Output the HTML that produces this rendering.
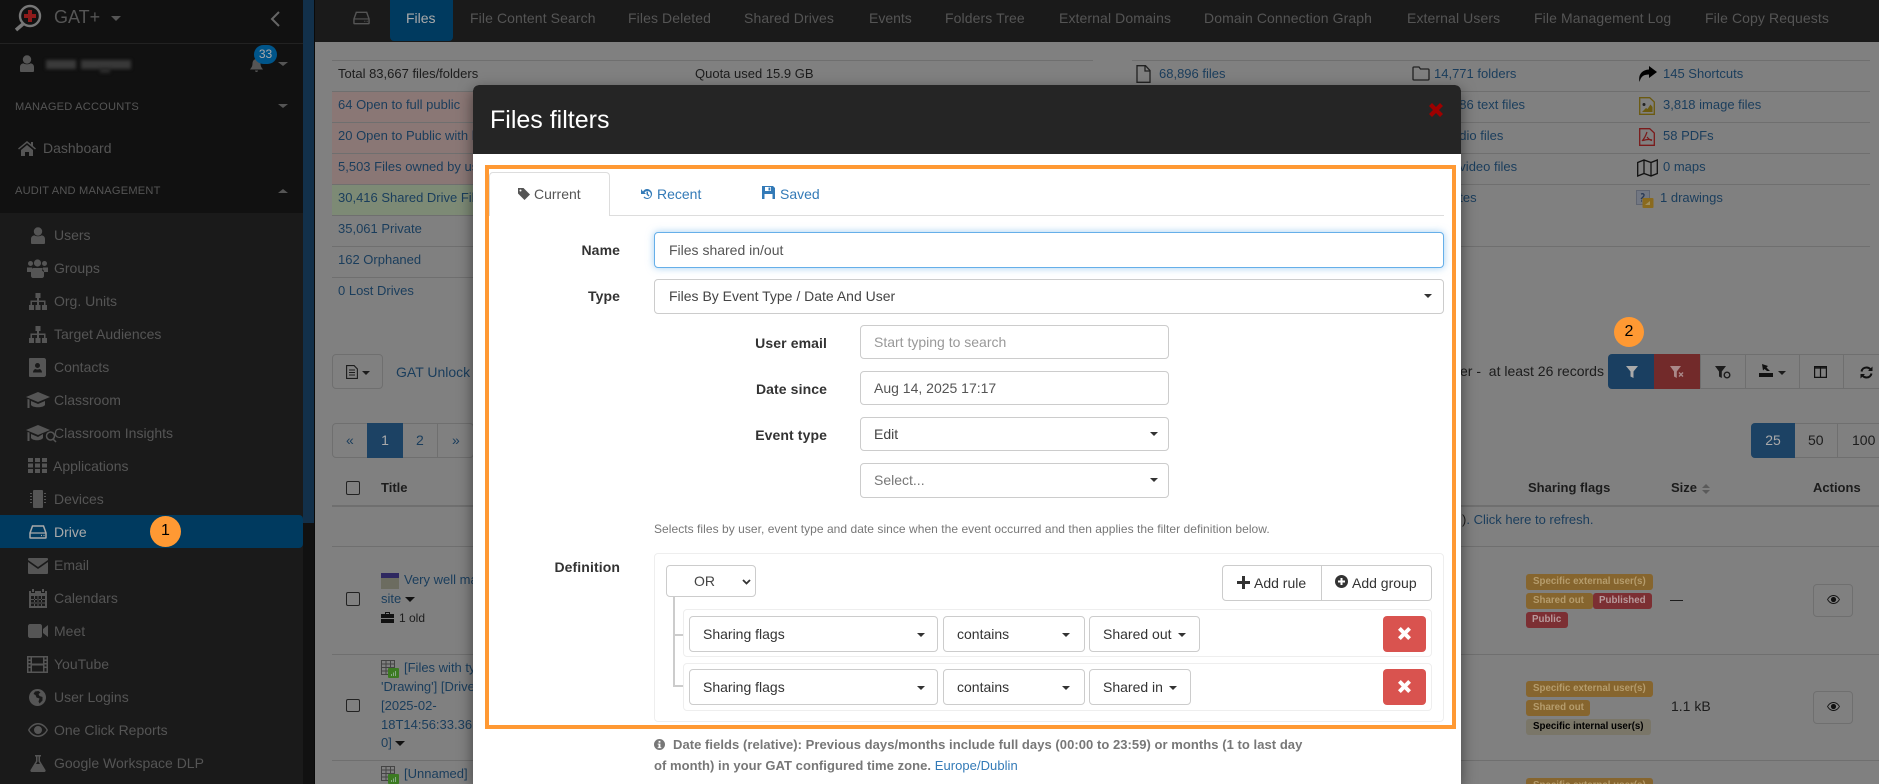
<!DOCTYPE html>
<html><head><meta charset="utf-8"><title>Files filters</title>
<style>
*{box-sizing:border-box}
html,body{margin:0;padding:0;width:1879px;height:784px;overflow:hidden}
#p{width:1879px;height:784px;overflow:hidden;position:relative;background:#808080;font-family:"Liberation Sans",sans-serif;font-size:14px}
.a{position:absolute}
.t{position:absolute;white-space:nowrap;line-height:20px}
svg{position:absolute;fill:currentColor;overflow:visible}
.s{color:#555;font-size:14px;left:54px}
.i{color:#555}
.n{color:#555;font-size:14px;top:8px}
.l{color:#1a3d5c;font-size:13px}
.k{color:#1c1c1c;font-size:13px}
.h{left:332px;width:761px;height:1px;background:#6f6f6f}
.h2{left:1132px;width:738px;height:1px;background:#6f6f6f}
.b{position:absolute;border:1px solid #6f6f6f}
.f{position:absolute;height:16px;border-radius:3px;font-size:9.75px;font-weight:bold;line-height:15px;padding-left:7px;white-space:nowrap;color:#b59c6c;background:#86652e}
.r{background:#7c2f33;color:#b89a9c}
.lab{position:absolute;white-space:nowrap;line-height:20px;font-weight:bold;color:#333;font-size:14px;text-align:right;letter-spacing:.1px}
.in{position:absolute;border:1px solid #ccc;border-radius:4px;background:#fff;color:#555;font-size:14px;padding:0 13px;white-space:nowrap}
.w{padding:0 14px}
.c{position:absolute;width:0;height:0;border-left:4px solid transparent;border-right:4px solid transparent;border-top:4px solid #333}
.cu{border-top:0;border-bottom:4px solid #555}
.rule{position:absolute;border:1px solid #eee;border-radius:4px;left:683px;width:749px;height:48px;background:#fff}
.del{position:absolute;left:1383px;width:43px;height:36px;background:#d9534f;border-radius:4px;color:#fff}
</style></head><body><div id="p">

<!-- sidebar -->
<div class="a" style="left:0;top:0;width:303px;height:784px;background:#1a1a1a"></div>
<div class="a" style="left:0;top:0;width:303px;height:213px;background:#111"></div>
<div class="a" style="left:0;top:43px;width:303px;height:1px;background:#222"></div>
<div class="a" style="left:303px;top:0;width:12px;height:784px;background:#111"></div>
<div class="a" style="left:303px;top:0;width:11px;height:523px;background:#12304a"></div>
<div class="a" style="left:314px;top:0;width:1px;height:784px;background:#0a0a0a"></div>

<!-- logo -->
<svg style="left:14px;top:3px;color:#666" width="29" height="29" viewBox="0 0 29 29"><circle cx="16" cy="13" r="10" fill="none" stroke="#777" stroke-width="2.4"/><path d="M9 21 2 27" stroke="#777" stroke-width="3.5" fill="none"/><path d="M14 7h4v4h4v4h-4v4h-4v-4h-4v-4h4z" fill="#8e1b1b"/></svg>
<div class="t" style="left:54px;top:7px;color:#555;font-size:18px">GAT+</div>
<div class="c" style="left:111px;top:16px;border-top-color:#555;border-left-width:5px;border-right-width:5px;border-top-width:5px"></div>
<svg style="left:270px;top:11px" width="10" height="16" viewBox="0 0 10 16"><path d="M9 1 2 8l7 7" fill="none" stroke="#666" stroke-width="2"/></svg>

<svg class="i" style="left:20px;top:55px" width="14" height="17" viewBox="0 0 14 17"><circle cx="7" cy="4.5" r="4.2"/><path d="M0 16v-4c0-2.5 2-3.6 3.5-3.6C5 9.6 9 9.6 10.5 8.4 12 8.4 14 9.500 14 12v4c0 .6-.4 1-1 1H1c-.6 0-1-.4-1-1z"/></svg>
<div class="a" style="left:46px;top:60px;width:30px;height:9px;background:#3a3a3a;filter:blur(1.5px)"></div>
<div class="a" style="left:81px;top:60px;width:50px;height:9px;background:#383838;filter:blur(1.5px)"></div>
<div class="a" style="left:100px;top:68px;width:10px;height:5px;background:#2c2c2c;filter:blur(1.5px)"></div>
<svg class="i" style="left:250px;top:59px" width="13" height="13" viewBox="0 0 13 13"><path d="M6.500 0C9 0 10.500 2 10.500 4.500c0 3 1.500 4.500 2.500 6H0c1-1.500 2.500-3 2.500-6C2.500 2 4 0 6.500 0zM5 11.500h3c0 1-.7 1.500-1.500 1.500S5 12.500 5 11.500z"/></svg>
<div class="a" style="left:254px;top:45px;width:23px;height:19px;border-radius:10px;background:#00558a;color:#aaa;font-size:12px;line-height:19px;text-align:center">33</div>
<div class="c" style="left:278px;top:62px;border-top-color:#555;border-left-width:5px;border-right-width:5px"></div>

<div class="t" style="left:15px;top:97px;color:#555;font-size:11.100px;font-weight:normal;letter-spacing:.2px">MANAGED ACCOUNTS</div>
<div class="c" style="left:278px;top:104px;border-top-color:#555;border-left-width:5px;border-right-width:5px"></div>
<svg class="i" style="left:18px;top:141px" width="18" height="15" viewBox="0 0 18 15"><path d="M9 0 0 7.500l1 1L9 2l8 6.500 1-1-3-2.500V1h-2v2.300zM3 9l6-5 6 5v6h-4v-4H7v4H3z"/></svg>
<div class="t s" style="left:43px;top:138px">Dashboard</div>
<div class="t" style="left:15px;top:181px;color:#555;font-size:11.100px;letter-spacing:.2px">AUDIT AND MANAGEMENT</div>
<div class="c cu" style="left:278px;top:189px;border-bottom-color:#555;border-left-width:5px;border-right-width:5px"></div>

<svg class="i" style="left:31px;top:227px" width="14" height="17" viewBox="0 0 14 17"><circle cx="7" cy="4.500" r="4.200"/><path d="M0 16v-4c0-2.500 2-3.600 3.500-3.600C5 9.600 9 9.600 10.500 8.400 12 8.400 14 9.500 14 12v4c0 .6-.4 1-1 1H1c-.6 0-1-.4-1-1z"/></svg>
<div class="t s" style="top:225px">Users</div>
<svg class="i" style="left:27px;top:259px" width="21" height="19" viewBox="0 0 21 19"><circle cx="10.500" cy="4" r="3.600"/><circle cx="3.500" cy="4.500" r="2.500"/><circle cx="17.500" cy="4.500" r="2.500"/><path d="M0 8.500h5l1 3-2 1.500H0zM21 8.500h-5l-1 3 2 1.500h4zM6 9h9l2 3v5c0 1-1 2-2 2H6c-1 0-2-1-2-2v-5z"/></svg>
<div class="t s" style="top:258px">Groups</div>
<svg class="i" style="left:28px;top:293px" width="20" height="17" viewBox="0 0 20 17"><path d="M7.500 0h5v5H11v2.500h6.500V12H19v5h-5v-5h2V9h-5v3h1.500v5h-5v-5H9V9H4v3h2v5H1v-5h1.500V7.500H9V5H7.500z"/></svg>
<div class="t s" style="top:291px">Org. Units</div>
<svg class="i" style="left:28px;top:326px" width="20" height="17" viewBox="0 0 20 17"><path d="M7.500 0h5v5H11v2.500h6.500V12H19v5h-5v-5h2V9h-5v3h1.500v5h-5v-5H9V9H4v3h2v5H1v-5h1.500V7.500H9V5H7.500z"/></svg>
<div class="t s" style="top:324px">Target Audiences</div>
<svg class="i" style="left:29px;top:358px" width="18" height="19" viewBox="0 0 18 19"><path fill-rule="evenodd" d="M1 0h14c1 0 2 1 2 2v15c0 1-1 2-2 2H1c-.6 0-1-.4-1-1V1c0-.6.4-1 1-1zM8.500 5a2.500 2.500 0 1 0 0 5 2.500 2.500 0 0 0 0-5zM4 14.500h9c0-2-1.500-3.500-2.500-3.500-1 .7-3 .7-4 0C5.500 11 4 12.500 4 14.500z"/></svg>
<div class="t s" style="top:357px">Contacts</div>
<svg class="i" style="left:26px;top:392px" width="24" height="18" viewBox="0 0 24 18"><path d="M12 0 0 5l12 5 12-5zM5 9v4c2 3 12 3 14 0V9l-7 3zM1.500 7v9h2V7.500z"/></svg>
<div class="t s" style="top:390px">Classroom</div>
<svg class="i" style="left:26px;top:425px" width="30" height="18" viewBox="0 0 30 18"><path d="M12 0 0 5l12 5 12-5zM5 9v4c2 3 10 3 12 0V9l-5 3zM1.500 7v9h2V7.500z"/><circle cx="24.500" cy="11" r="4" fill="none" stroke="#555" stroke-width="1.500"/><path d="M27 14l3 3" stroke="#555" stroke-width="1.500"/></svg>
<div class="t s" style="top:423px">Classroom Insights</div>
<svg class="i" style="left:28px;top:458px" width="20" height="15" viewBox="0 0 20 15"><path d="M0 0h5v4H0zM7 0h5v4H7zM14 0h5v4h-5zM0 5.500h5v4H0zM7 5.500h5v4H7zM14 5.500h5v4h-5zM0 11h5v4H0zM7 11h5v4H7zM14 11h5v4h-5z"/></svg>
<div class="t s" style="left:53px;top:456px">Applications</div>
<svg class="i" style="left:30px;top:490px" width="16" height="18" viewBox="0 0 16 18"><path d="M4 0h8c.6 0 1 .4 1 1v16c0 .6-.4 1-1 1H4c-.6 0-1-.4-1-1V1c0-.6.4-1 1-1zM0 3h2v1H0zM0 6h2v1H0zM0 9h2v1H0zM0 12h2v1H0zM14 3h2v1h-2zM14 6h2v1h-2zM14 9h2v1h-2zM14 12h2v1h-2z"/></svg>
<div class="t s" style="top:489px">Devices</div>

<div class="a" style="left:0;top:515px;width:303px;height:33px;background:#003a5f;border-radius:0 4px 4px 0"></div>
<svg style="left:29px;top:525px;color:#aaa" width="18" height="14" viewBox="0 0 18 14"><path d="M3.500 1h11l2.500 7v4.500c0 .3-.2.5-.5.5h-15c-.3 0-.5-.2-.5-.5V8z" fill="none" stroke="#aaa" stroke-width="1.500"/><path d="M1 8h16M12 10.500h1M14.500 10.500h1" stroke="#aaa" stroke-width="1.200" fill="none"/></svg>
<div class="t s" style="top:522px;color:#aaa">Drive</div>
<div class="a" style="left:150px;top:516px;width:31px;height:31px;border-radius:50%;background:#f93;color:#000;font-size:16px;line-height:29px;text-align:center">1</div>

<svg class="i" style="left:28px;top:558px" width="20" height="16" viewBox="0 0 20 16"><path d="M0 1c0-.6.4-1 1-1h18c.6 0 1 .4 1 1v1L10 9 0 2zM0 4v11c0 .6.4 1 1 1h18c.6 0 1-.4 1-1V4l-10 7z"/></svg>
<div class="t s" style="top:555px">Email</div>
<svg class="i" style="left:29px;top:589px" width="18" height="19" viewBox="0 0 18 19"><path fill-rule="evenodd" d="M3 0h2v3H3zM13 0h2v3h-2zM0 2h2v2h4V2h6v2h4V2h2v17H0zM2 7v10h14V7zM5 7h1v10H5zM8.500 7h1v10h-1zM12 7h1v10h-1zM2 10h14v1H2zM2 13.500h14v1H2z"/></svg>
<div class="t s" style="top:588px">Calendars</div>
<svg class="i" style="left:28px;top:624px" width="20" height="14" viewBox="0 0 20 14"><path d="M2 0h10c1 0 2 1 2 2v10c0 1-1 2-2 2H2c-1 0-2-1-2-2V2C0 1 1 0 2 0zM15 5l5-4v12l-5-4z"/></svg>
<div class="t s" style="top:621px">Meet</div>
<svg class="i" style="left:27px;top:656px" width="21" height="17" viewBox="0 0 21 17"><path fill-rule="evenodd" d="M0 0h21v17H0zM1.500 1.500v2h2v-2zM1.500 5v2h2V5zM1.500 8.500v2h2v-2zM1.500 12v3.500h2V12zM17.500 1.500v2h2v-2zM17.500 5v2h2V5zM17.500 8.500v2h2v-2zM17.500 12v3.500h2V12zM5 1.500v6h11v-6zM5 9.500v6h11v-6z"/></svg>
<div class="t s" style="top:654px">YouTube</div>
<svg class="i" style="left:29px;top:689px" width="17" height="17" viewBox="0 0 17 17"><path fill-rule="evenodd" d="M8.500 0a8.500 8.500 0 1 1 0 17 8.500 8.500 0 0 1 0-17zM6 2.500 4.500 5l2 1 1 2.500 3 1-1 3 1 2 3-3V8l-3-1-1-2 2-1.500L9.500 2z"/></svg>
<div class="t s" style="top:687px">User Logins</div>
<svg class="i" style="left:28px;top:723px" width="20" height="14" viewBox="0 0 20 14"><path fill-rule="evenodd" d="M10 0c4.500 0 8 3 10 7-2 4-5.500 7-10 7S2 11 0 7c2-4 5.500-7 10-7zM10 1.500C7 1.500 3.500 3.500 1.500 7c2 3.500 5.500 5.500 8.500 5.500s6.500-2 8.500-5.500c-2-3.500-5.500-5.500-8.500-5.500zM10 3a4 4 0 1 1 0 8 4 4 0 0 1 0-8z"/></svg>
<div class="t s" style="top:720px">One Click Reports</div>
<svg class="i" style="left:30px;top:755px" width="16" height="17" viewBox="0 0 16 17"><path fill-rule="evenodd" d="M5 0h6v1.500h-1V6l5.500 9c.5 1-.2 2-1 2h-13c-.8 0-1.500-1-1-2L6 6V1.500H5zM7.500 1.500V6.500L6 9h4L8.500 6.500v-5z"/></svg>
<div class="t s" style="top:753px">Google Workspace DLP</div>

<!-- top nav -->
<div class="a" style="left:315px;top:0;width:1564px;height:42px;background:#1a1a1a"></div>
<svg style="left:353px;top:11px" width="17" height="14" viewBox="0 0 18 14"><path d="M3.500 1h11l2.500 7v4.500c0 .3-.2.5-.5.5h-15c-.3 0-.5-.2-.5-.5V8z" fill="none" stroke="#555" stroke-width="1.500"/><path d="M1 8h16M12 10.500h1M14.500 10.500h1" stroke="#555" stroke-width="1.200" fill="none"/></svg>
<div class="a" style="left:390px;top:0;width:63px;height:41px;background:#003a5f;border-radius:0 0 4px 4px"></div>
<div class="t n" style="left:406px;color:#aaa">Files</div>
<div class="t n" style="left:470px;letter-spacing:.1px">File Content Search</div>
<div class="t n" style="left:628px;letter-spacing:.1px">Files Deleted</div>
<div class="t n" style="left:744px;letter-spacing:.1px">Shared Drives</div>
<div class="t n" style="left:869px">Events</div>
<div class="t n" style="left:945px;letter-spacing:.1px">Folders Tree</div>
<div class="t n" style="left:1059px;letter-spacing:.1px">External Domains</div>
<div class="t n" style="left:1204px;letter-spacing:.1px">Domain Connection Graph</div>
<div class="t n" style="left:1407px;letter-spacing:.1px">External Users</div>
<div class="t n" style="left:1534px;letter-spacing:.1px">File Management Log</div>
<div class="t n" style="left:1705px;letter-spacing:.1px">File Copy Requests</div>

<!-- stats tables -->
<div class="a" style="left:332px;top:91px;width:761px;height:93px;background:#8a7775"></div>
<div class="a" style="left:332px;top:184px;width:761px;height:31px;background:#7d8a75"></div>
<div class="a h" style="top:60px"></div><div class="a h" style="top:91px"></div><div class="a h" style="top:122px"></div><div class="a h" style="top:153px"></div><div class="a h" style="top:184px"></div><div class="a h" style="top:215px"></div><div class="a h" style="top:246px"></div>
<div class="a h2" style="top:60px"></div><div class="a h2" style="top:91px"></div><div class="a h2" style="top:122px"></div><div class="a h2" style="top:153px"></div><div class="a h2" style="top:184px"></div><div class="a h2" style="top:246px"></div>
<div class="a" style="left:332px;top:277px;width:761px;height:1px;background:#6f6f6f"></div>
<div class="t k" style="left:338px;top:64px">Total 83,667 files/folders</div>
<div class="t k" style="left:695px;top:64px">Quota used 15.9 GB</div>
<div class="t l" style="left:338px;top:95px">64 Open to full public</div>
<div class="t l" style="left:338px;top:126px">20 Open to Public with link</div>
<div class="t l" style="left:338px;top:157px">5,503 Files owned by users</div>
<div class="t l" style="left:338px;top:188px">30,416 Shared Drive Files</div>
<div class="t l" style="left:338px;top:219px">35,061 Private</div>
<div class="t l" style="left:338px;top:250px">162 Orphaned</div>
<div class="t l" style="left:338px;top:281px">0 Lost Drives</div>

<svg style="left:1136px;top:65px" width="15" height="18" viewBox="0 0 15 18"><path d="M1 .7h8.500L14 5.500v11.800H1zM9 1v5h5" fill="none" stroke="#222" stroke-width="1.300"/></svg>
<div class="t l" style="left:1159px;top:64px">68,896 files</div>
<svg style="left:1412px;top:66px" width="18" height="15" viewBox="0 0 18 15"><path d="M1 2c0-.6.400-1 1-1h5l1.500 2H16c.6 0 1 .4 1 1v9c0 .6-.4 1-1 1H2c-.6 0-1-.4-1-1z" fill="none" stroke="#222" stroke-width="1.300"/></svg>
<div class="t l" style="left:1434px;top:64px">14,771 folders</div>
<svg style="left:1638px;top:66px;color:#000" width="19" height="16" viewBox="0 0 19 16"><path d="M11 0l8 6-8 6V8.500C6 8.500 3 10 1.500 16 0 9 3.500 4 11 3.500z"/></svg>
<div class="t l" style="left:1663px;top:64px">145 Shortcuts</div>
<div class="t l" style="left:1434px;top:95px">13,186 text files</div>
<svg style="left:1639px;top:97px" width="16" height="18" viewBox="0 0 16 18"><path d="M.7.7h10L15.300 5v12.300H.7z" fill="none" stroke="#6b5a10" stroke-width="1.300"/><circle cx="5" cy="7.500" r="1.500" fill="#222"/><path d="M3 15l4-4 1.500 1 3-4.500 2 2.500v5z" fill="#6b5a10"/></svg>
<div class="t l" style="left:1663px;top:95px">3,818 image files</div>
<div class="t l" style="left:1434px;top:126px">5 audio files</div>
<svg style="left:1639px;top:128px" width="16" height="18" viewBox="0 0 16 18"><path d="M.7.7h10L15.300 5v12.300H.7z" fill="none" stroke="#7a1a1a" stroke-width="1.300"/><path d="M8 4c-1 3-2 6-5 9M8 9c1.500 2 3 3 5 3.500M4 12.500c3-1 6-1.500 9-.5" fill="none" stroke="#7a1a1a" stroke-width="1.200"/></svg>
<div class="t l" style="left:1663px;top:126px">58 PDFs</div>
<div class="t l" style="left:1434px;top:157px">231 video files</div>
<svg style="left:1637px;top:159px" width="21" height="18" viewBox="0 0 21 18"><path d="M.7 3.500 7 1l7 2.500L20.300 1v13.500L14 17l-7-2.500L.7 17zM7 1v13.500M14 3.500V17" fill="none" stroke="#111" stroke-width="1.300"/></svg>
<div class="t l" style="left:1663px;top:157px">0 maps</div>
<div class="t l" style="left:1434px;top:188px">2 notes</div>
<svg style="left:1636px;top:190px" width="18" height="18" viewBox="0 0 18 18"><rect x="0.500" y="0.500" width="13" height="14" fill="#727782" stroke="#5f6470"/><path d="M5 4c3-1 4 1 2 3L5 9M5 11h1" stroke="#2a3a55" fill="none" stroke-width="1.300"/><rect x="6.500" y="8" width="11" height="10" rx="1" fill="#8a6a1e"/><path d="M9 15l5-4v4z" fill="#a0905e"/></svg>
<div class="t l" style="left:1660px;top:188px">1 drawings</div>

<!-- toolbar -->
<div class="b" style="left:332px;top:354px;width:51px;height:35px;border-radius:4px"></div>
<svg style="left:346px;top:365px" width="12" height="14" viewBox="0 0 12 14"><path d="M.6.6h7.500L11.400 4v9.400H.6zM3 5h6M3 7.500h6M3 10h6" fill="none" stroke="#1c1c1c" stroke-width="1.100"/></svg>
<div class="c" style="left:362px;top:371px;border-top-color:#1c1c1c"></div>
<div class="t l" style="left:396px;top:362px;font-size:14px">GAT Unlock</div>
<div class="t k" style="left:1460px;top:361px;font-size:14px;color:#1c1c1c">er -&nbsp; at least 26 records</div>
<div class="a" style="left:1614px;top:317px;width:30px;height:30px;border-radius:50%;background:#f93;color:#000;font-size:16px;line-height:29px;text-align:center">2</div>
<div class="a" style="left:1608px;top:354px;width:46px;height:35px;background:#1a3f61;border-radius:4px 0 0 4px"></div>
<svg style="left:1626px;top:366px;color:#aaa" width="12" height="12" viewBox="0 0 12 12"><path d="M0 0h12L7.500 5.500V12l-3-1.500v-5z"/></svg>
<div class="a" style="left:1654px;top:354px;width:46px;height:35px;background:#722a2a"></div>
<svg style="left:1670px;top:366px;color:#a88" width="15" height="12" viewBox="0 0 15 12"><path d="M0 0h11L6.800 5.500V12l-2.800-1.500v-5zM8.500 7l1-1 1.500 1.500L12.500 6l1 1L12 8.500l1.500 1.500-1 1L11 9.500 9.500 11l-1-1L10 8.500z"/></svg>
<div class="b" style="left:1700px;top:354px;width:46px;height:35px"></div>
<svg style="left:1715px;top:366px;color:#1c1c1c" width="16" height="13" viewBox="0 0 16 13"><path d="M0 0h11L6.800 5.500V12l-2.800-1.500v-5z"/><circle cx="12" cy="9" r="2.800" fill="none" stroke="#1c1c1c" stroke-width="1.400"/></svg>
<div class="b" style="left:1745px;top:354px;width:55px;height:35px"></div>
<svg style="left:1759px;top:363px;color:#111" width="14" height="15" viewBox="0 0 14 15"><path d="M3 1l6 2-1.500 1.500L11 8H8L5.500 6 4 7.500zM0 10h14v4H0z"/></svg>
<div class="c" style="left:1778px;top:371px;border-top-color:#1c1c1c"></div>
<div class="b" style="left:1799px;top:354px;width:45px;height:35px"></div>
<svg style="left:1814px;top:366px" width="13" height="12" viewBox="0 0 13 12"><path d="M.6.6h11.800v10.800H.6zM6.500.6v10.800M.6 2h11.800" fill="none" stroke="#111" stroke-width="1.200"/></svg>
<div class="b" style="left:1843px;top:354px;width:40px;height:35px"></div>
<svg style="left:1860px;top:366px" width="13" height="13" viewBox="0 0 13 13"><path d="M1.500 5.500C2 3 4 1.500 6.500 1.500c1.500 0 3 .7 4 1.800M11.500 7.500C11 10 9 11.500 6.500 11.500c-1.500 0-3-.7-4-1.800" fill="none" stroke="#111" stroke-width="2"/><path d="M12.500.5v4.500H8zM.5 12.500V8H5z" fill="#111"/></svg>

<!-- pagination -->
<div class="b" style="left:332px;top:423px;width:142px;height:35px;border-radius:4px"></div>
<div class="a" style="left:367px;top:423px;width:36px;height:35px;background:#1c4264;color:#aaa;text-align:center;line-height:34px;font-size:14px">1</div>
<div class="a" style="left:437px;top:423px;width:1px;height:35px;background:#6f6f6f"></div>
<div class="t l" style="left:346px;top:430px;font-size:14px">«</div>
<div class="t l" style="left:416px;top:430px;font-size:14px">2</div>
<div class="t l" style="left:452px;top:430px;font-size:14px">»</div>
<div class="b" style="left:1751px;top:423px;width:140px;height:35px;border-radius:4px"></div>
<div class="a" style="left:1751px;top:423px;width:44px;height:35px;background:#1c4264;color:#aaa;text-align:center;line-height:34px;font-size:14px;border-radius:4px 0 0 4px">25</div>
<div class="a" style="left:1837px;top:423px;width:1px;height:35px;background:#6f6f6f"></div>
<div class="t k" style="left:1808px;top:430px;font-size:14px">50</div>
<div class="t k" style="left:1852px;top:430px;font-size:14px">100</div>

<!-- table -->
<div class="a" style="left:346px;top:481px;width:14px;height:14px;border:1px solid #222;border-radius:2px"></div>
<div class="t" style="left:381px;top:478px;font-size:13px;font-weight:bold;color:#1c1c1c">Title</div>
<div class="t" style="left:1528px;top:478px;font-size:13px;font-weight:bold;color:#1c1c1c">Sharing flags</div>
<div class="t" style="left:1671px;top:478px;font-size:13px;font-weight:bold;color:#1c1c1c">Size</div>
<div class="c cu" style="left:1702px;top:484px;border-bottom-color:#5a5a5a"></div>
<div class="c" style="left:1702px;top:490px;border-top-color:#5a5a5a"></div>
<div class="t" style="left:1813px;top:478px;font-size:13px;font-weight:bold;color:#1c1c1c">Actions</div>
<div class="a" style="left:332px;top:505px;width:1547px;height:2px;background:#6f6f6f"></div>
<div class="a" style="left:332px;top:546px;width:1547px;height:1px;background:#6f6f6f"></div>
<div class="a" style="left:332px;top:654px;width:1547px;height:1px;background:#6f6f6f"></div>
<div class="a" style="left:332px;top:760px;width:1547px;height:1px;background:#6f6f6f"></div>
<div class="t l" style="left:1462px;top:510px"><span style="color:#1c1c1c">)</span>. Click here to refresh.</div>

<div class="a" style="left:346px;top:592px;width:14px;height:14px;border:1px solid #222;border-radius:2px"></div>
<div class="a" style="left:381px;top:573px;width:18px;height:16px;background:#6c6c60"></div>
<div class="a" style="left:381px;top:573px;width:18px;height:5px;background:#2f2860"></div>
<div class="t l" style="left:404px;top:570px">Very well made</div>
<div class="t l" style="left:381px;top:589px">site</div>
<div class="c" style="left:405px;top:597px;border-top-color:#111;border-left-width:5px;border-right-width:5px;border-top-width:5px"></div>
<svg style="left:381px;top:612px;color:#111" width="13" height="11" viewBox="0 0 13 11"><path d="M4 0h5v2h4v4H0V2h4zM5 1v1h3V1zM0 7h13v4H0z"/></svg>
<div class="t k" style="left:399px;top:608px;font-size:12px">1 old</div>

<div class="a" style="left:346px;top:699px;width:14px;height:13px;border:1px solid #222;border-radius:2px"></div>
<svg style="left:381px;top:660px" width="18" height="18" viewBox="0 0 18 18"><path d="M.5.5h13v14H.5zM.5 4h13M.5 7.500h13M.5 11h13M5 .5v14M9.500.5v14" fill="none" stroke="#444" stroke-width="1"/><rect x="7" y="8" width="11" height="10" rx="1" fill="#3c7a22"/><path d="M10 16v-2h1v2zM12 16v-3.500h1V16zM14 16v-5h1v5z" fill="#8a8"/></svg>
<div class="t l" style="left:404px;top:658px">[Files with type</div>
<div class="t l" style="left:381px;top:677px">'Drawing'] [Drive</div>
<div class="t l" style="left:381px;top:696px">[2025-02-</div>
<div class="t l" style="left:381px;top:715px">18T14:56:33.36</div>
<div class="t l" style="left:381px;top:733px">0]</div>
<div class="c" style="left:395px;top:741px;border-top-color:#111;border-left-width:5px;border-right-width:5px;border-top-width:5px"></div>
<svg style="left:381px;top:766px" width="18" height="18" viewBox="0 0 18 18"><path d="M.5.5h13v14H.5zM.5 4h13M.5 7.500h13M.5 11h13M5 .5v14M9.500.5v14" fill="none" stroke="#444" stroke-width="1"/><rect x="7" y="8" width="11" height="10" rx="1" fill="#3c7a22"/><path d="M10 16v-2h1v2zM12 16v-3.500h1V16zM14 16v-5h1v5z" fill="#8a8"/></svg>
<div class="t l" style="left:404px;top:764px">[Unnamed]</div>

<div class="f" style="left:1526px;top:574px;width:127px">Specific external user(s)</div>
<div class="f" style="left:1526px;top:593px;width:67px">Shared out</div>
<div class="f r" style="left:1593px;top:593px;width:59px;padding-left:6px">Published</div>
<div class="f r" style="left:1526px;top:612px;width:42px;padding-left:6px">Public</div>
<div class="f" style="left:1526px;top:681px;width:127px">Specific external user(s)</div>
<div class="f" style="left:1526px;top:700px;width:64px">Shared out</div>
<div class="f" style="left:1526px;top:719px;width:125px;background:#7a7668;color:#000">Specific internal user(s)</div>
<div class="f" style="left:1526px;top:778px;width:127px">Specific external user(s)</div>

<div class="a" style="left:1670px;top:600px;width:13px;height:1px;background:#1c1c1c"></div>
<div class="t k" style="left:1671px;top:696px;font-size:14px">1.1 kB</div>
<div class="b" style="left:1813px;top:584px;width:40px;height:33px;border-radius:4px"></div>
<svg style="left:1827px;top:595px;color:#111" width="13" height="9" viewBox="0 0 20 14"><path fill-rule="evenodd" d="M10 0c4.500 0 8 3 10 7-2 4-5.500 7-10 7S2 11 0 7c2-4 5.500-7 10-7zM10 1.500C7 1.500 3.500 3.500 1.500 7c2 3.500 5.500 5.500 8.500 5.500s6.500-2 8.500-5.500c-2-3.500-5.500-5.500-8.500-5.500zM10 3a4 4 0 1 1 0 8 4 4 0 0 1 0-8z"/></svg>
<div class="b" style="left:1813px;top:691px;width:40px;height:33px;border-radius:4px"></div>
<svg style="left:1827px;top:702px;color:#111" width="13" height="9" viewBox="0 0 20 14"><path fill-rule="evenodd" d="M10 0c4.500 0 8 3 10 7-2 4-5.500 7-10 7S2 11 0 7c2-4 5.500-7 10-7zM10 1.500C7 1.500 3.500 3.500 1.500 7c2 3.500 5.500 5.500 8.500 5.500s6.500-2 8.500-5.500c-2-3.500-5.500-5.500-8.500-5.500zM10 3a4 4 0 1 1 0 8 4 4 0 0 1 0-8z"/></svg>

<!-- modal -->
<div class="a" style="left:473px;top:85px;width:988px;height:699px;background:#fff;border-radius:6px 6px 0 0;box-shadow:0 5px 15px rgba(0,0,0,.5)"></div>
<div class="a" style="left:473px;top:85px;width:988px;height:69px;background:#252525;border-radius:6px 6px 0 0"></div>
<div class="t" style="left:490px;top:105px;line-height:30px;color:#fff;font-size:25px">Files filters</div>
<svg style="left:1429px;top:103px;color:#9e0000" width="14" height="14" viewBox="0 0 14 14"><path d="M3 0 7 4l4-4 3 3-4 4 4 4-3 3-4-4-4 4-3-3 4-4-4-4z"/></svg>

<div class="a" style="left:485px;top:165px;width:971px;height:564px;border:4px solid #f93"></div>

<!-- tabs -->
<div class="a" style="left:609px;top:215px;width:835px;height:1px;background:#ddd"></div>
<div class="a" style="left:489px;top:172px;width:121px;height:44px;background:#fff;border:1px solid #ddd;border-bottom:0;border-radius:4px 4px 0 0"></div>
<svg style="left:518px;top:188px;color:#555" width="12" height="12" viewBox="0 0 12 12"><path fill-rule="evenodd" d="M0 0h5.500L12 6.500 6.500 12 0 5.500zM2.500 1.500a1 1 0 1 0 0 2 1 1 0 0 0 0-2z"/></svg>
<div class="t" style="left:534px;top:184px;color:#555">Current</div>
<svg style="left:641px;top:188px;color:#337ab7" width="12" height="12" viewBox="0 0 12 12"><path d="M2 3.500C3 1.700 4.500 1 6 1a5 5 0 1 1-3.500 8.500l1-1A3.500 3.500 0 1 0 3.500 4.500L5 6H0V1zM5.500 3.500H7V6l1.500 1.500-1 1L5.500 6.500z"/></svg>
<div class="t" style="left:657px;top:184px;color:#337ab7">Recent</div>
<svg style="left:762px;top:186px;color:#337ab7" width="13" height="13" viewBox="0 0 13 13"><path fill-rule="evenodd" d="M0 0h11l2 2v11H0zM3 1v4h6V1zM6.500 1.500h1.800v3H6.500zM2.500 8v5h8V8z"/></svg>
<div class="t" style="left:780px;top:184px;color:#337ab7">Saved</div>

<!-- form -->
<div class="lab" style="right:1259px;top:240px">Name</div>
<div class="in w" style="left:654px;top:232px;width:790px;height:36px;line-height:34px;border-color:#66afe9;box-shadow:0 0 8px rgba(102,175,233,.6)">Files shared in/out</div>
<div class="lab" style="right:1259px;top:286px">Type</div>
<div class="in w" style="left:654px;top:279px;width:790px;height:35px;line-height:33px;color:#444">Files By Event Type / Date And User</div>
<div class="c" style="left:1424px;top:294px"></div>
<div class="lab" style="right:1052px;top:333px">User email</div>
<div class="in" style="left:860px;top:325px;width:309px;height:34px;line-height:32px;color:#999">Start typing to search</div>
<div class="lab" style="right:1052px;top:379px">Date since</div>
<div class="in" style="left:860px;top:371px;width:309px;height:34px;line-height:32px">Aug 14, 2025 17:17</div>
<div class="lab" style="right:1052px;top:425px">Event type</div>
<div class="in" style="left:860px;top:417px;width:309px;height:34px;line-height:32px;color:#444">Edit</div>
<div class="c" style="left:1150px;top:432px"></div>
<div class="in" style="left:860px;top:463px;width:309px;height:35px;line-height:33px;color:#777">Select...</div>
<div class="c" style="left:1150px;top:478px"></div>
<div class="t" style="left:654px;top:519px;font-size:12px;color:#777;letter-spacing:.045px">Selects files by user, event type and date since when the event occurred and then applies the filter definition below.</div>

<div class="lab" style="right:1259px;top:557px">Definition</div>
<div class="a" style="left:654px;top:553px;width:790px;height:169px;border:1px solid #eee;border-radius:4px"></div>
<div class="a" style="left:673px;top:597px;width:2px;height:90px;background:#ccc"></div>
<div class="a" style="left:675px;top:634px;width:9px;height:2px;background:#ccc"></div>
<div class="a" style="left:675px;top:685px;width:9px;height:2px;background:#ccc"></div>
<div class="in" style="left:666px;top:565px;width:90px;height:32px;line-height:30px;padding-left:27px;color:#444">OR</div>
<svg style="left:742px;top:579px" width="9" height="6" viewBox="0 0 9 6"><path d="M1 1l3.500 3.500L8 1" fill="none" stroke="#333" stroke-width="1.800"/></svg>
<div class="in" style="left:1222px;top:565px;width:210px;height:36px;line-height:34px;color:#333;padding:0"></div>
<div class="a" style="left:1321px;top:565px;width:1px;height:36px;background:#ccc"></div>
<svg style="left:1237px;top:576px;color:#333" width="13" height="13" viewBox="0 0 13 13"><path d="M5 0h3v5h5v3H8v5H5V8H0V5h5z"/></svg>
<div class="t" style="left:1254px;top:573px;color:#333">Add rule</div>
<svg style="left:1335px;top:575px;color:#333" width="13" height="13" viewBox="0 0 13 13"><path fill-rule="evenodd" d="M6.500 0a6.500 6.500 0 1 1 0 13 6.500 6.500 0 0 1 0-13zM5.500 3v2.500H3v2h2.500V10h2V7.500H10v-2H7.500V3z"/></svg>
<div class="t" style="left:1352px;top:573px;color:#333">Add group</div>

<div class="rule" style="top:609px"></div>
<div class="rule" style="top:663px"></div>
<div class="in" style="left:689px;top:616px;width:249px;height:36px;line-height:34px;color:#333">Sharing flags</div><div class="c" style="left:917px;top:633px"></div>
<div class="in" style="left:943px;top:616px;width:142px;height:36px;line-height:34px;color:#333">contains</div><div class="c" style="left:1062px;top:633px"></div>
<div class="in" style="left:1089px;top:616px;width:111px;height:36px;line-height:34px;color:#333">Shared out</div><div class="c" style="left:1178px;top:633px"></div>
<div class="del" style="top:616px"></div><svg style="left:1398px;top:627px;color:#fff" width="13" height="13" viewBox="0 0 14 14"><path d="M3 0 7 4l4-4 3 3-4 4 4 4-3 3-4-4-4 4-3-3 4-4-4-4z"/></svg>
<div class="in" style="left:689px;top:669px;width:249px;height:36px;line-height:34px;color:#333">Sharing flags</div><div class="c" style="left:917px;top:686px"></div>
<div class="in" style="left:943px;top:669px;width:142px;height:36px;line-height:34px;color:#333">contains</div><div class="c" style="left:1062px;top:686px"></div>
<div class="in" style="left:1089px;top:669px;width:102px;height:36px;line-height:34px;color:#333">Shared in</div><div class="c" style="left:1169px;top:686px"></div>
<div class="del" style="top:669px"></div><svg style="left:1398px;top:680px;color:#fff" width="13" height="13" viewBox="0 0 14 14"><path d="M3 0 7 4l4-4 3 3-4 4 4 4-3 3-4-4-4 4-3-3 4-4-4-4z"/></svg>

<svg style="left:654px;top:739px;color:#777" width="11" height="11" viewBox="0 0 12 12"><path fill-rule="evenodd" d="M6 0a6 6 0 1 1 0 12A6 6 0 0 1 6 0zM5 2v2h2V2zM4 5v1h1v3H4v1h4V9H7V5z"/></svg>
<div class="t" style="left:673px;top:735px;font-size:13px;font-weight:bold;color:#777;letter-spacing:.05px">Date fields (relative): Previous days/months include full days (00:00 to 23:59) or months (1 to last day</div>
<div class="t" style="left:654px;top:756px;font-size:13px;font-weight:bold;color:#777;letter-spacing:.05px">of month) in your GAT configured time zone. <a style="color:#337ab7;font-weight:normal">Europe/Dublin</a></div>

</div></body></html>
